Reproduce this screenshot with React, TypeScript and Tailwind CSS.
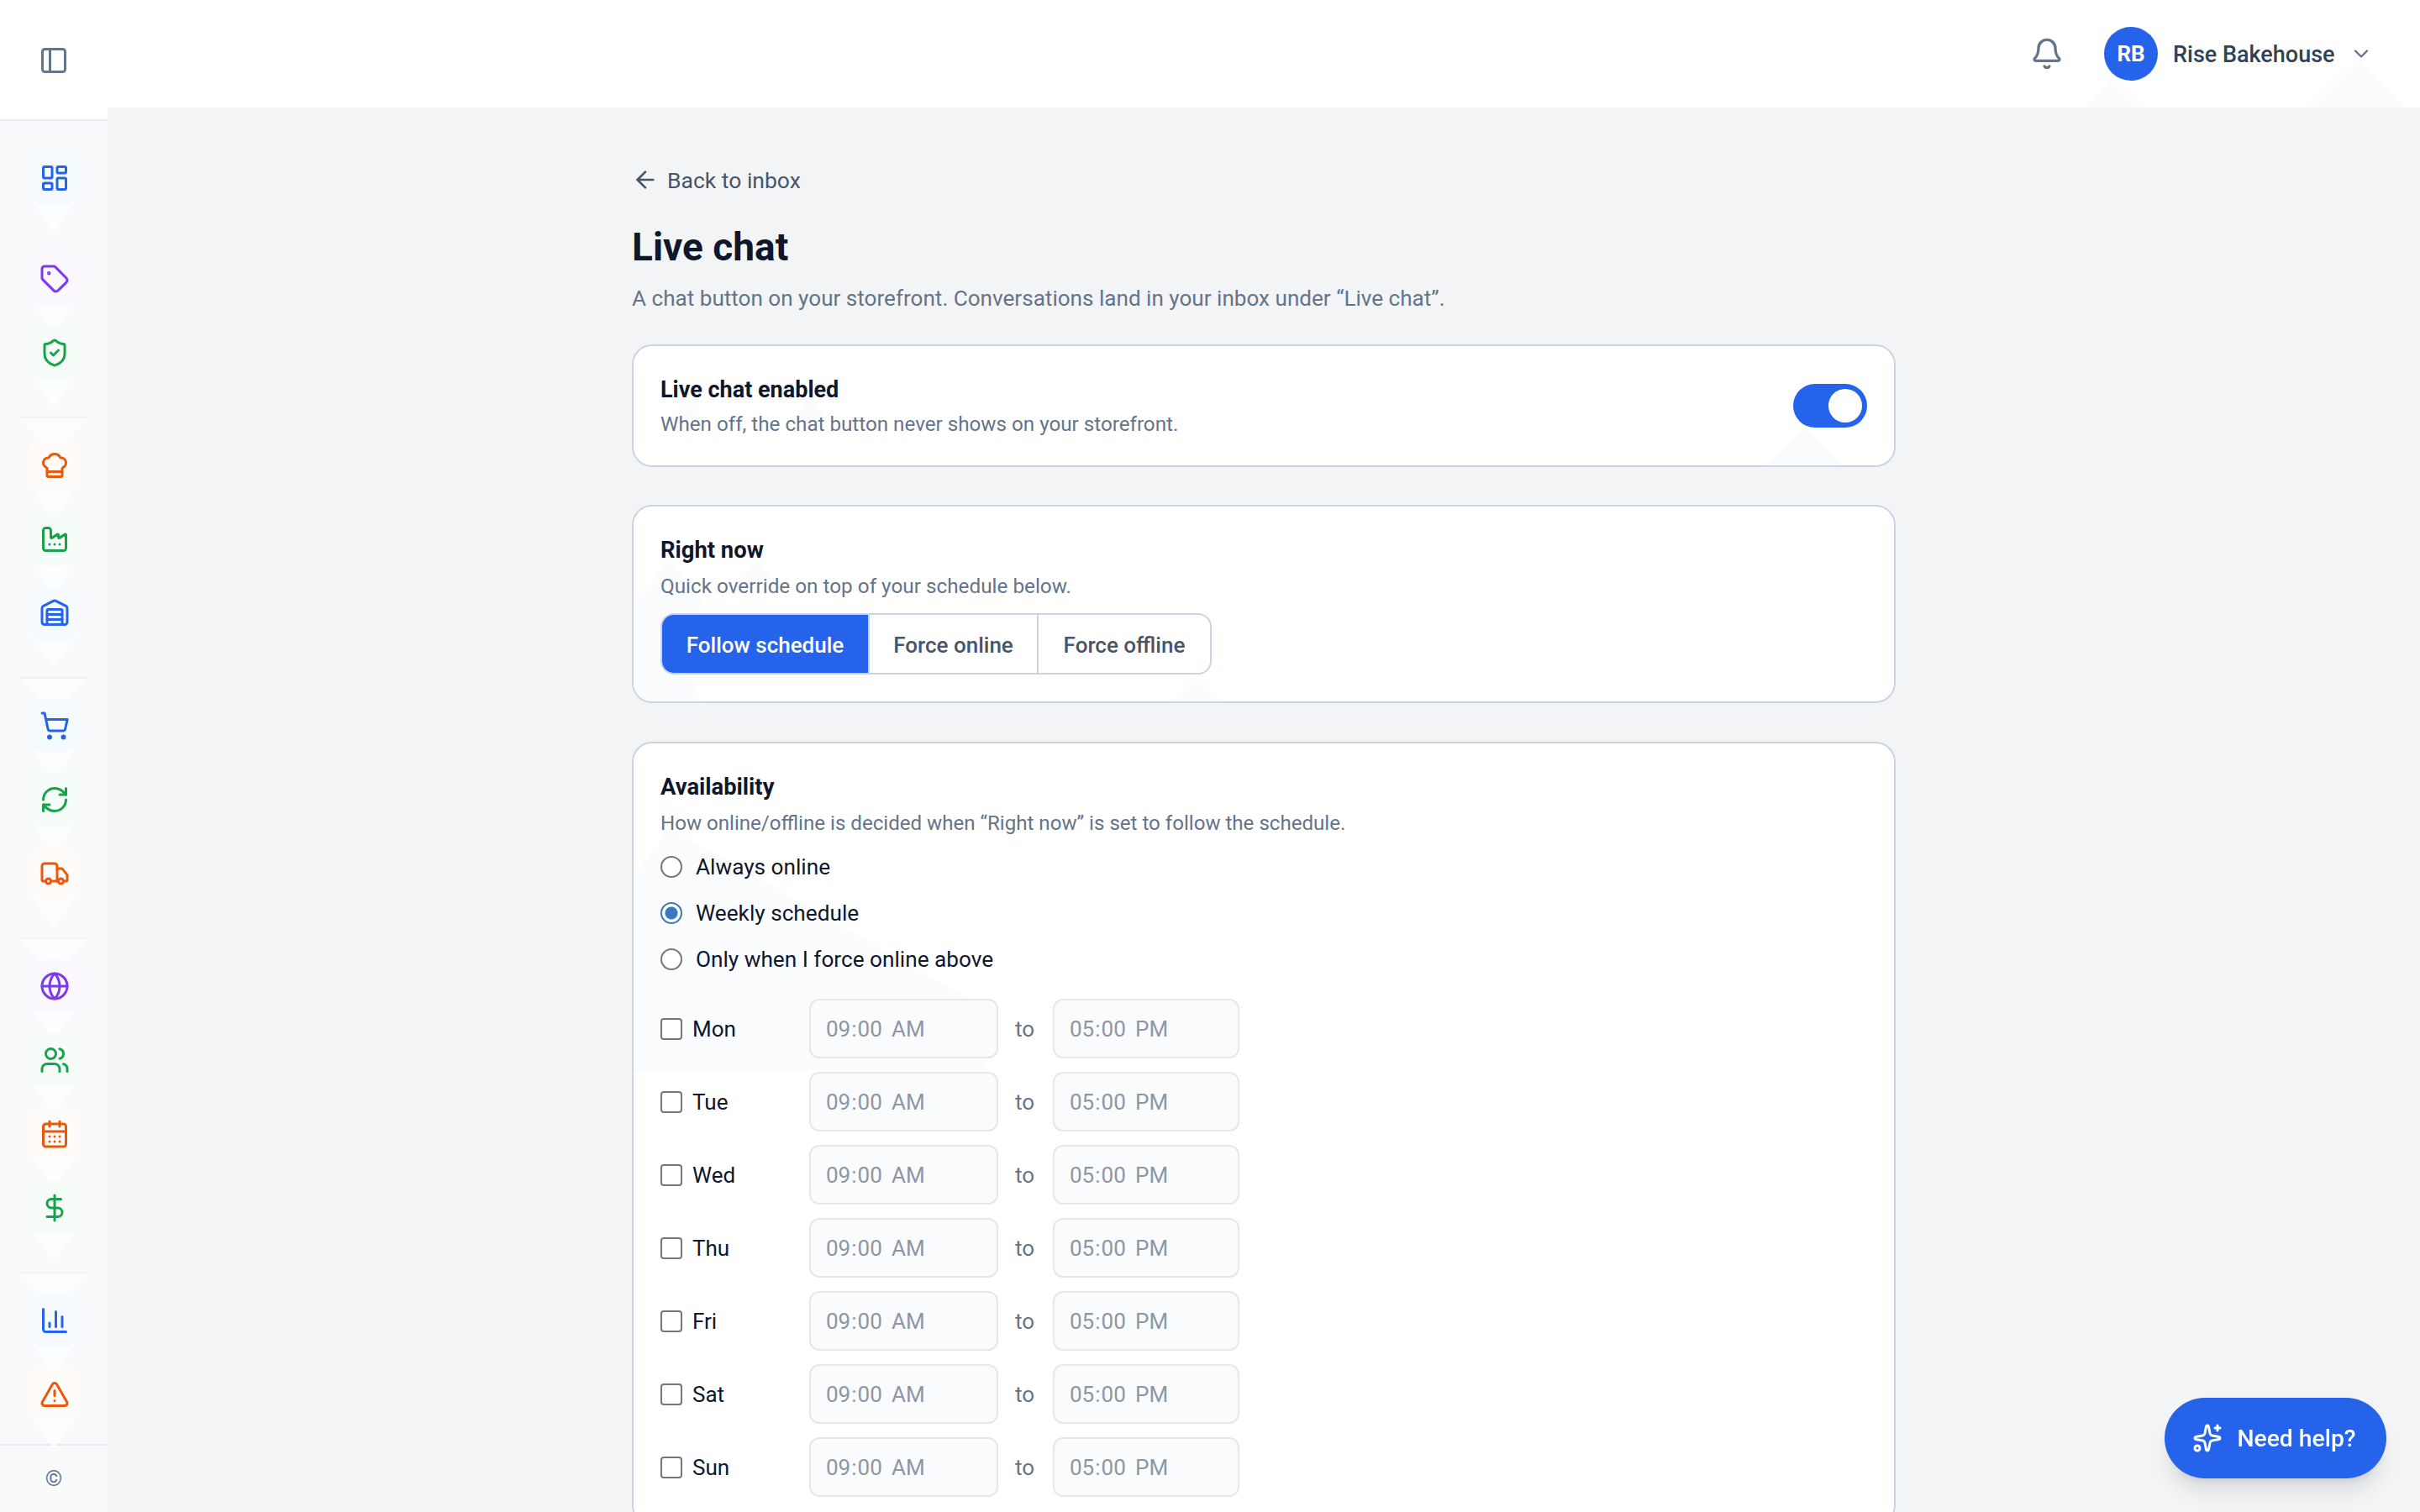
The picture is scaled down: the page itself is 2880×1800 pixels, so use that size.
import React from "react";
import {
  PanelLeft, LayoutDashboard, Tag, ShieldCheck, ChefHat, Factory, Warehouse, ShoppingCart, RefreshCw, Truck,
  Globe, Users, CalendarDays, DollarSign, ChartColumn, TriangleAlert, Bell, ChevronDown, ArrowLeft, Sparkles,
} from "lucide-react";

type IconT = typeof Tag;

function Tile({ icon: Icon, tile, color }: { icon: IconT; tile: string; color: string }) {
  return (
    <div className="relative h-16 w-16">
      <div className="absolute left-[6px] top-[60px] h-[36px] w-[52px] bg-[#fcfdfe] [clip-path:polygon(0_0,100%_0,50%_100%)]" />
      <div className={`relative flex h-16 w-16 items-center justify-center rounded-[20px] ${tile}`}>
        <Icon size={36} strokeWidth={2} className={`ml-[2px] ${color}`} />
      </div>
    </div>
  );
}

function Sep() {
  return (
    <div className="relative h-[2px] w-20 bg-[#f1f3f7]">
      <div className="absolute left-0 top-[2px] h-[25px] w-20 bg-[#fcfdfe] [clip-path:polygon(0_0,100%_0,70%_100%,30%_100%)]" />
    </div>
  );
}

const blue = "bg-[#f5faff]";
const purple = "bg-[#fbf9ff]";
const green = "bg-[#f6fdf8]";
const orange = "bg-[#fefbf8]";
const cBlue = "text-[#2563eb]";
const cViolet = "text-[#7c3aed]";
const cGreen = "text-[#16a34a]";
const cOrange = "text-[#ea580c]";

function Sidebar() {
  return (
    <aside className="flex h-full w-32 shrink-0 flex-col bg-[#f9fafc]">
      <div className="flex h-[144px] shrink-0 items-center justify-center border-b-2 border-[#e7eaf0] bg-white pt-[2px]">
        <PanelLeft size={36} strokeWidth={2} className="text-[#64748b]" />
      </div>
      <nav className="flex flex-1 flex-col items-center pt-9">
        <Tile icon={LayoutDashboard} tile={blue} color={cBlue} />
        <div className="mt-14 flex flex-col gap-6">
          <Tile icon={Tag} tile={purple} color={cViolet} />
          <Tile icon={ShieldCheck} tile={green} color={cGreen} />
        </div>
        <div className="mt-[44px] mb-6"><Sep /></div>
        <div className="flex flex-col gap-6">
          <Tile icon={ChefHat} tile={orange} color={cOrange} />
          <Tile icon={Factory} tile={green} color={cGreen} />
          <Tile icon={Warehouse} tile={blue} color={cBlue} />
        </div>
        <div className="mt-[44px] mb-6"><Sep /></div>
        <div className="flex flex-col gap-6">
          <Tile icon={ShoppingCart} tile={blue} color={cBlue} />
          <Tile icon={RefreshCw} tile={green} color={cGreen} />
          <Tile icon={Truck} tile={orange} color={cOrange} />
        </div>
        <div className="mt-[44px] mb-6"><Sep /></div>
        <div className="flex flex-col gap-6">
          <Tile icon={Globe} tile={purple} color={cViolet} />
          <Tile icon={Users} tile={green} color={cGreen} />
          <Tile icon={CalendarDays} tile={orange} color={cOrange} />
          <Tile icon={DollarSign} tile={green} color={cGreen} />
        </div>
        <div className="mt-[44px] mb-6"><Sep /></div>
        <div className="flex flex-col gap-6">
          <Tile icon={ChartColumn} tile={blue} color={cBlue} />
          <Tile icon={TriangleAlert} tile={orange} color={cOrange} />
        </div>
      </nav>
      <div className="flex h-[81px] shrink-0 items-center justify-center border-t-2 border-[#e7eaf0] text-[26px] text-[#64748b]">
        ©
      </div>
    </aside>
  );
}

function Header() {
  return (
    <header className="relative flex h-32 shrink-0 items-center justify-end overflow-hidden bg-white pr-[56px]">
      <div className="absolute bottom-0 left-[2352px] h-[34px] w-[70px] bg-[#fbfcfd] [clip-path:polygon(50%_0,100%_100%,0_100%)]" />
      <div className="absolute bottom-0 left-[2618px] h-[58px] w-[118px] bg-[#fbfcfd] [clip-path:polygon(50%_0,100%_100%,0_100%)]" />
      <Bell size={40} strokeWidth={2} className="relative mr-[48px] text-[#64748b]" />
      <div className="relative flex h-16 w-16 items-center justify-center rounded-full bg-[#2563eb] pt-[1px] text-[26px] font-bold text-white">
        RB
      </div>
      <span className="relative ml-[18px] w-[194px] whitespace-nowrap pt-[2px] text-[27px] font-medium text-[#334155]">Rise Bakehouse</span>
      <ChevronDown size={28} strokeWidth={2} className="relative ml-[16px] text-[#64748b]" />
    </header>
  );
}

function TimeInput({ value, width }: { value: string; width: string }) {
  return (
    <input
      type="time"
      disabled
      defaultValue={value}
      className={`h-[71px] rounded-[12px] border-2 border-[#e5e7eb] bg-[#fafbfd] px-[17px] pt-[2px] text-[26px] text-[#8e96a3] [&::-webkit-datetime-edit-ampm-field]:ml-[6px] ${width}`}
    />
  );
}

function DayRow({ day }: { day: string }) {
  return (
    <div className="flex items-center">
      <label className="flex w-[177px] items-center gap-[12px] text-[26px] text-[#0f172a]">
        <input type="checkbox" className="h-[26px] w-[26px] appearance-none rounded-[4px] border-[2.5px] border-[#767676] bg-white" />
        <span className="pt-[2px]">{day}</span>
      </label>
      <TimeInput value="09:00" width="w-[225px]" />
      <span className="ml-[20px] mr-[21px] w-6 pt-[2px] text-[26px] text-[#64748b]">to</span>
      <TimeInput value="17:00" width="w-[222px]" />
    </div>
  );
}

function Radio({ label, checked }: { label: string; checked?: boolean }) {
  return (
    <label className="flex h-10 items-center gap-4 text-[26.2px] text-[#0f172a]">
      <input
        type="radio"
        name="avail"
        defaultChecked={checked}
        className={
          checked
            ? "h-[26px] w-[26px] appearance-none rounded-full border-[2.5px] border-[#3b78bd] bg-[radial-gradient(circle,#3b78bd_0,#3b78bd_7px,#ffffff_8px)]"
            : "h-[26px] w-[26px] appearance-none rounded-full border-[2.5px] border-[#767676] bg-white"
        }
      />
      <span className="pt-[2px]">{label}</span>
    </label>
  );
}

export default function App() {
  return (
    <div className="flex h-screen w-full overflow-hidden bg-[#f3f4f6] font-['Roboto',sans-serif]">
      <Sidebar />
      <div className="flex min-w-0 flex-1 flex-col">
        <Header />
        <main className="flex-1 overflow-hidden">
          <div className="mx-auto w-[1504px] pt-[66px]">
            <a className="flex h-10 items-center gap-[10px] text-[26.5px] font-normal text-[#475569]">
              <ArrowLeft size={32} strokeWidth={2} className="text-[#475569]" />
              <span className="pt-[1px]">Back to inbox</span>
            </a>
            <h1 className="mt-[30px] text-[46px] font-bold leading-[60px] text-[#0f172a]">Live chat</h1>
            <p className="mt-[11px] text-[26.1px] leading-10 text-[#64748b]">
              A chat button on your storefront. Conversations land in your inbox under “Live chat”.
            </p>

            <section className="relative mt-[35px] flex h-[146px] items-center justify-between overflow-hidden rounded-3xl border-2 border-[#cbd5e1] bg-white px-8">
              <div className="absolute left-[32px] top-[63px] h-[30px] w-[60px] bg-[#fbfcfe] [clip-path:polygon(50%_0,100%_100%,0_100%)]" />
              <div className="absolute left-[184px] top-[63px] h-[28px] w-[54px] bg-[#fbfcfe] [clip-path:polygon(50%_0,100%_100%,0_100%)]" />
              <div className="absolute bottom-0 left-[1348px] h-[45px] w-[90px] bg-[#fafbfd] [clip-path:polygon(50%_0,100%_100%,0_100%)]" />
              <div className="relative">
                <h2 className="text-[27px] font-bold leading-10 text-[#0f172a]">Live chat enabled</h2>
                <p className="mt-[2px] pt-[1px] text-[24.2px] leading-9 text-[#64748b]">When off, the chat button never shows on your storefront.</p>
              </div>
              <div className="relative flex h-[52px] w-[88px] items-center justify-end rounded-full bg-[#2563eb] pr-[6px]">
                <div className="h-10 w-10 rounded-full bg-white" />
              </div>
            </section>

            <section className="relative mt-[45px] h-[236px] overflow-hidden rounded-3xl border-2 border-[#cbd5e1] bg-white px-8 pt-8">
              <div className="absolute left-0 top-[64px] h-[170px] w-[140px] bg-[#fbfcfe] [clip-path:polygon(0_30%,30%_0,60%_30%,25%_55%,60%_100%,0_100%)]" />
              <div className="absolute left-[112px] top-[64px] h-[40px] w-[70px] bg-[#fbfcfe] [clip-path:polygon(50%_0,100%_100%,0_100%)]" />
              <div className="absolute bottom-0 left-[640px] h-[34px] w-[60px] bg-[#fbfcfe] [clip-path:polygon(50%_0,100%_100%,0_100%)]" />
              <div className="relative">
                <h2 className="text-[27.4px] font-bold leading-10 text-[#0f172a]">Right now</h2>
                <p className="mt-[5px] text-[24.3px] leading-9 text-[#64748b]">Quick override on top of your schedule below.</p>
                <div className="mt-[14px] flex h-[73px] w-fit overflow-hidden rounded-2xl border-2 border-[#cbd5e1] bg-white text-[26px] font-medium">
                  <div className="flex w-[245px] items-center justify-center bg-[#2563eb] pt-[4px] text-white">Follow schedule</div>
                  <div className="flex w-[201px] items-center justify-center border-l-2 border-[#cbd5e1] pt-[4px] text-[#475569]">Force online</div>
                  <div className="flex w-[206px] items-center justify-center border-l-2 border-[#cbd5e1] pt-[4px] text-[#475569]">Force offline</div>
                </div>
              </div>
            </section>

            <section className="relative mt-[46px] overflow-hidden rounded-3xl border-2 border-[#cbd5e1] bg-white px-8 pb-8 pt-8">
              <div className="absolute left-0 top-[100px] h-[290px] w-[420px] bg-[#fbfcfe] [clip-path:polygon(0_60px,42px_0,420px_215px,420px_290px,0_290px)]" />
              <div className="relative">
                <h2 className="text-[27.4px] font-bold leading-10 text-[#0f172a]">Availability</h2>
                <p className="mt-[4px] pt-[1px] text-[24.1px] leading-9 text-[#64748b]">How online/offline is decided when “Right now” is set to follow the schedule.</p>
                <div className="mt-[14px] flex flex-col gap-[15px]">
                  <Radio label="Always online" />
                  <Radio label="Weekly schedule" checked />
                  <Radio label="Only when I force online above" />
                </div>
                <div className="mt-[27px] flex flex-col gap-4">
                  {["Mon", "Tue", "Wed", "Thu", "Fri", "Sat", "Sun"].map((d) => (
                    <DayRow key={d} day={d} />
                  ))}
                </div>
              </div>
            </section>
          </div>
        </main>
      </div>
      <button className="fixed bottom-10 right-10 flex h-[96px] w-[264px] items-center justify-center gap-[17px] rounded-full bg-[#2563eb] pr-[3px] text-[28.3px] font-medium text-white shadow-xl">
        <Sparkles size={36} strokeWidth={2} />
        <span className="pt-[2px]">Need help?</span>
      </button>
    </div>
  );
}
